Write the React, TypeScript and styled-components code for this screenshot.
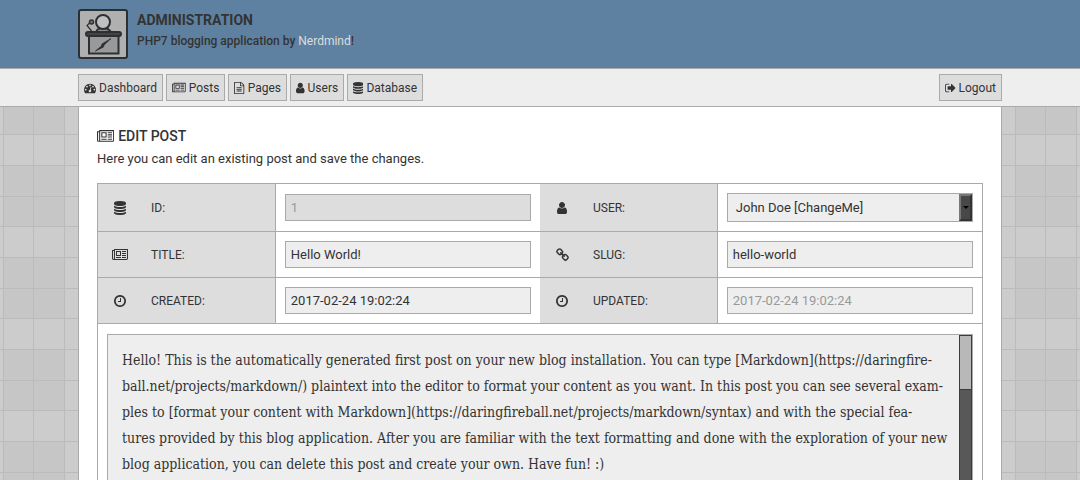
import React from "react";
import styled, { createGlobalStyle } from "styled-components";

const ui = `Roboto, "Noto Sans", "Liberation Sans", sans-serif`;
const slab = `"DejaVu Serif Condensed", "DejaVu Serif", "Noto Serif", serif`;
const ink = "#333333";
const line = "#aaaaaa";

const GlobalStyle = createGlobalStyle`
  *, *::before, *::after { box-sizing: border-box; }
  body {
    margin: 0;
    color: ${ink};
    font: 14px/24px ${ui};
    background-color: #c6c6c6;
    background-image:
      linear-gradient(90deg, #bbbbbb 0 1px, transparent 1px 30px, #bbbbbb 30px 31px, transparent 31px 61px, #bbbbbb 61px 62px, transparent 62px 92px),
      linear-gradient(180deg, #bbbbbb 0 1px, transparent 1px 31px, #bbbbbb 31px 32px, transparent 32px 61px, #bbbbbb 61px 62px, transparent 62px 92px),
      linear-gradient(90deg, transparent 62px, #cccccc 62px),
      linear-gradient(180deg, transparent 62px, #cccccc 62px);
    background-size: 92px 92px;
    background-position: calc(50% - 31px) 73px;
  }
`;

const Container = styled.div`
  width: 100%;
  max-width: 924px;
  margin: 0 auto;
`;

const Header = styled.header`
  background: #5e81a1;
  border-bottom: 1px solid ${line};
`;

const Brand = styled(Container)`
  display: flex;
  gap: 9px;
  padding: 9px 0;
`;

const Logo = styled.svg`
  width: 50px;
  height: 50px;
  flex: none;
`;

const BrandText = styled.div`
  padding-top: 1px;
`;

const BrandTitle = styled.h1`
  margin: 0;
  font-size: 14px;
  line-height: 20px;
  font-weight: 700;
  text-transform: uppercase;
`;

const Tagline = styled.p`
  margin: 0;
  font-size: 12px;
  line-height: 22px;
  font-weight: 500;
`;

const TaglineLink = styled.a`
  color: #dddddd;
  font-weight: 400;
  text-decoration: none;
`;

const Nav = styled.nav`
  background: #eeeeee;
  border-bottom: 1px solid ${line};
`;

const NavBar = styled(Container)`
  display: flex;
  justify-content: space-between;
  padding: 5px 0;
`;

const NavGroup = styled.div`
  display: flex;
  gap: 3px;
`;

const NavLink = styled.a`
  display: flex;
  align-items: center;
  gap: 3px;
  height: 27px;
  padding: 0 5px;
  border: 1px solid ${line};
  background: #dddddd;
  color: ${ink};
  font-size: 12px;
  text-decoration: none;
`;

const Icon = styled.svg<{ $size: number }>`
  height: ${(p) => p.$size}px;
  width: auto;
  flex: none;
  fill: currentColor;
`;

const Panel = styled(Container)`
  padding: 18px;
  background: #ffffff;
  border: solid ${line};
  border-width: 0 1px;
`;

const Heading = styled.h2`
  display: flex;
  align-items: center;
  gap: 4px;
  margin: 0;
  font-size: 14px;
  line-height: 22px;
  font-weight: 500;
  text-transform: uppercase;
`;

const Intro = styled.p`
  margin: 0 0 12px;
  font-size: 13px;
`;

const Form = styled.form`
  border: 1px solid ${line};
`;

const Row = styled.div`
  display: grid;
  grid-template-columns: 2fr 3fr 2fr 3fr;
  border-bottom: 1px solid ${line};
`;

const LabelCell = styled.label`
  display: flex;
  align-items: center;
  background: #dddddd;
  font-size: 12px;
  text-transform: uppercase;
`;

const IconSlot = styled.span`
  display: flex;
  justify-content: center;
  width: 44px;
  margin-right: 9px;
`;

const FieldCell = styled.div`
  display: flex;
  align-items: center;
  padding: 9px;
  border-left: 1px solid ${line};
`;

const TextInput = styled.input`
  width: 100%;
  height: 27px;
  padding: 0 5px;
  border: 1px solid ${line};
  border-radius: 0;
  background: #eeeeee;
  color: ${ink};
  font: 13px ${ui};
  &:disabled { background: #dddddd; color: #999999; }
  &:read-only:not(:disabled) { color: #999999; }
`;

const SelectFrame = styled.div`
  display: flex;
  width: 100%;
  height: 29px;
  border: 1px solid ${line};
  background: #eeeeee;
`;

const Select = styled.select`
  appearance: none;
  flex: 1;
  min-width: 0;
  padding: 0 8px;
  border: 0;
  background: transparent;
  color: ${ink};
  font: 13px ${ui};
`;

const Arrow = styled.span`
  display: flex;
  align-items: center;
  justify-content: center;
  width: 13px;
  border: 2px solid;
  border-color: #777777 #333333 #333333 #777777;
  background: #484848;
  &::after {
    content: "";
    border: 3px solid transparent;
    border-top-color: #000000;
    border-bottom: 0;
  }
`;

const EditorFrame = styled.div`
  display: flex;
  margin: 10px 9px 9px;
  border: 1px solid ${line};
  background: #eeeeee;
`;

const Editor = styled.textarea`
  flex: 1;
  min-width: 0;
  height: 400px;
  padding: 12px 14px;
  border: 0;
  resize: none;
  overflow: hidden;
  white-space: pre;
  background: transparent;
  color: ${ink};
  font: 14px/26px ${slab};
`;

const Track = styled.div`
  width: 13px;
  background: #585858;
  border: solid #3c3c3c;
  border-width: 0 1px;
`;

const Thumb = styled.div`
  height: 55px;
  background: #b8b8b8;
  border: solid #3c3c3c;
  border-width: 1px 0;
`;

type IconName = "gauge" | "news" | "page" | "user" | "database" | "logout" | "clock" | "link";

const icons: Record<IconName, { box: string; d: string }> = {
  gauge: {
    box: "0 0 1792 1792",
    d: "M384 1152q0-53-37.5-90.5t-90.5-37.5-90.5 37.5-37.5 90.5 37.5 90.5 90.5 37.5 90.5-37.5 37.5-90.5zm192-448q0-53-37.5-90.5t-90.5-37.5-90.5 37.5-37.5 90.5 37.5 90.5 90.5 37.5 90.5-37.5 37.5-90.5zm428 481l101-382q6-26-7.5-48.5t-38.5-29.5-48 6.5-30 39.5l-101 382q-60 5-107 43.5t-63 98.5q-20 77 20 146t117 89 146-20 89-117q16-60-6-117t-72-91zm660-33q0-53-37.5-90.5t-90.5-37.5-90.5 37.5-37.5 90.5 37.5 90.5 90.5 37.5 90.5-37.5 37.5-90.5zm-640-640q0-53-37.5-90.5t-90.5-37.5-90.5 37.5-37.5 90.5 37.5 90.5 90.5 37.5 90.5-37.5 37.5-90.5zm448 192q0-53-37.5-90.5t-90.5-37.5-90.5 37.5-37.5 90.5 37.5 90.5 90.5 37.5 90.5-37.5 37.5-90.5zm320 448q0 261-141 483-19 29-54 29h-1402q-35 0-54-29-141-221-141-483 0-182 71-348t191-286 286-191 348-71 348 71 286 191 191 286 71 348z",
  },
  news: {
    box: "0 0 2048 1792",
    d: "M1024 512h-384v384h384v-384zm128 640v128h-640v-128h640zm0-768v640h-640v-640h640zm640 768v128h-512v-128h512zm0-256v128h-512v-128h512zm0-256v128h-512v-128h512zm0-256v128h-512v-128h512zm-1536 960v-960h-128v960q0 26 19 45t45 19 45-19 19-45zm1664 0v-1088h-1536v1088q0 33-11 64h1483q26 0 45-19t19-45zm128-1216v1216q0 80-56 136t-136 56h-1664q-80 0-136-56t-56-136v-1088h256v-128h1792z",
  },
  page: {
    box: "128 0 1536 1792",
    d: "M1596 380q28 28 48 76t20 88v1152q0 40-28 68t-68 28h-1344q-40 0-68-28t-28-68v-1600q0-40 28-68t68-28h896q40 0 88 20t76 48zm-444-244v376h376q-10-29-22-41l-313-313q-12-12-41-22zm384 1528v-1024h-416q-40 0-68-28t-28-68v-416h-768v1536h1280zm-1024-864q0-14 9-23t23-9h704q14 0 23 9t9 23v64q0 14-9 23t-23 9h-704q-14 0-23-9t-9-23v-64zm736 224q14 0 23 9t9 23v64q0 14-9 23t-23 9h-704q-14 0-23-9t-9-23v-64q0-14 9-23t23-9h704zm0 256q14 0 23 9t9 23v64q0 14-9 23t-23 9h-704q-14 0-23-9t-9-23v-64q0-14 9-23t23-9h704z",
  },
  user: {
    box: "256 0 1280 1792",
    d: "M1536 1399q0 109-62.5 187t-150.5 78h-854q-88 0-150.5-78t-62.5-187q0-85 8.5-160.5t31.5-152 58.5-131 94-89 134.5-34.5q131 128 313 128t313-128q76 0 134.5 34.5t94 89 58.5 131 31.5 152 8.5 160.5zm-256-887q0 159-112.5 271.5t-271.5 112.5-271.5-112.5-112.5-271.5 112.5-271.5 271.5-112.5 271.5 112.5 112.5 271.5z",
  },
  database: {
    box: "128 0 1536 1792",
    d: "M896 768q237 0 443-43t325-127v170q0 69-103 128t-280 93.5-385 34.5-385-34.5-280-93.5-103-128v-170q119 84 325 127t443 43zm0 768q237 0 443-43t325-127v170q0 69-103 128t-280 93.5-385 34.5-385-34.5-280-93.5-103-128v-170q119 84 325 127t443 43zm0-384q237 0 443-43t325-127v170q0 69-103 128t-280 93.5-385 34.5-385-34.5-280-93.5-103-128v-170q119 84 325 127t443 43zm0-1152q208 0 385 34.5t280 93.5 103 128v128q0 69-103 128t-280 93.5-385 34.5-385-34.5-280-93.5-103-128v-128q0-69 103-128t280-93.5 385-34.5z",
  },
  logout: {
    box: "64 0 1600 1792",
    d: "M704 1440q0 4 1 20t.5 26.5-3 23.5-10 19.5-20.5 6.5h-320q-119 0-203.5-84.5t-84.5-203.5v-704q0-119 84.5-203.5t203.5-84.5h320q13 0 22.5 9.5t9.5 22.5q0 4 1 20t.5 26.5-3 23.5-10 19.5-20.5 6.5h-320q-66 0-113 47t-47 113v704q0 66 47 113t113 47h312l11.5 1 11.5 3 8 5.5 7 9 2 13.5zm928-544q0 26-19 45l-544 544q-19 19-45 19t-45-19-19-45v-288h-448q-26 0-45-19t-19-45v-384q0-26 19-45t45-19h448v-288q0-26 19-45t45-19 45 19l544 544q19 19 19 45z",
  },
  clock: {
    box: "128 0 1536 1792",
    d: "M1024 544v448q0 14-9 23t-23 9h-320q-14 0-23-9t-9-23v-64q0-14 9-23t23-9h224v-352q0-14 9-23t23-9h64q14 0 23 9t9 23zm416 352q0-148-73-273t-198-198-273-73-273 73-198 198-73 273 73 273 198 198 273 73 273-73 198-198 73-273zm224 0q0 209-103 385.5t-279.5 279.5-385.5 103-385.5-103-279.5-279.5-103-385.5 103-385.5 279.5-279.5 385.5-103 385.5 103 279.5 279.5 103 385.5z",
  },
  link: {
    box: "64 0 1664 1792",
    d: "M1520 1216q0-40-28-68l-208-208q-28-28-68-28-42 0-72 32 3 3 19 18.5t21.5 21.5 15 19 13 25.5 3.5 27.5q0 40-28 68t-68 28q-15 0-27.5-3.5t-25.5-13-19-15-21.5-21.5-18.5-19q-33 31-33 73 0 40 28 68l206 207q27 27 68 27 40 0 68-26l147-146q28-28 28-67zm-703-705q0-40-28-68l-206-207q-28-28-68-28-39 0-68 27l-147 146q-28 28-28 67 0 40 28 68l208 208q27 27 68 27 42 0 72-31-3-3-19-18.5t-21.5-21.5-15-19-13-25.5-3.5-27.5q0-40 28-68t68-28q15 0 27.5 3.5t25.5 13 19 15 21.5 21.5 18.5 19q33-31 33-73zm895 705q0 120-85 203l-147 146q-83 83-203 83-121 0-204-85l-206-207q-83-83-83-203 0-123 88-209l-88-88q-86 88-208 88-120 0-204-84l-208-208q-84-84-84-204t85-203l147-146q83-83 203-83 121 0 204 85l206 207q83 83 83 203 0 123-88 209l88 88q86-88 208-88 120 0 204 84l208 208q84 84 84 204z",
  },
};

function Glyph({ name, size = 14 }: { name: IconName; size?: number }) {
  return (
    <Icon viewBox={icons[name].box} $size={size} aria-hidden="true">
      <path d={icons[name].d} />
    </Icon>
  );
}

function FieldLabel({ icon, id, children }: { icon: IconName; id: string; children: React.ReactNode }) {
  return (
    <LabelCell htmlFor={id}>
      <IconSlot>
        <Glyph name={icon} />
      </IconSlot>
      {children}
    </LabelCell>
  );
}

const links: { icon: IconName; text: string }[] = [
  { icon: "gauge", text: "Dashboard" },
  { icon: "news", text: "Posts" },
  { icon: "page", text: "Pages" },
  { icon: "user", text: "Users" },
  { icon: "database", text: "Database" },
];

const body = `Hello! This is the automatically generated first post on your new blog installation. You can type [Markdown](https://daringfire-
ball.net/projects/markdown/) plaintext into the editor to format your content as you want. In this post you can see several exam-
ples to [format your content with Markdown](https://daringfireball.net/projects/markdown/syntax) and with the special fea-
tures provided by this blog application. After you are familiar with the text formatting and done with the exploration of your new
blog application, you can delete this post and create your own. Have fun! :)`;

export default function App() {
  return (
    <>
      <GlobalStyle />
      <Header>
        <Brand>
          <Logo viewBox="0 0 50 50" fill="none" stroke="#2d3033" strokeWidth="2" aria-hidden="true">
            <rect x="1" y="1" width="48" height="48" rx="2" fill="#b0b0b0" />
            <path d="M18 23c1-3 3-4 7-4s6 1 8 4z" fill="#8f8f8f" />
            <circle cx="25" cy="13" r="7" fill="#c0c0c0" />
            <circle cx="13.5" cy="13" r="2" fill="#777777" strokeWidth="1.5" />
            <path d="M11.5 14l-2.5 2.5 5 6" strokeWidth="1.2" />
            <rect x="11" y="26" width="29.5" height="18.5" fill="#999999" />
            <rect x="8" y="23" width="35" height="4" rx="2" fill="#444444" />
            <path d="M33 29.500l-9 5.500-.5 2-6 5 8-4 .5-2z" fill="#2d3033" strokeWidth="0.8" />
          </Logo>
          <BrandText>
            <BrandTitle>Administration</BrandTitle>
            <Tagline>
              PHP7 blogging application by <TaglineLink href="#">Nerdmind</TaglineLink>!
            </Tagline>
          </BrandText>
        </Brand>
      </Header>
      <Nav>
        <NavBar>
          <NavGroup>
            {links.map((l) => (
              <NavLink href="#" key={l.text}>
                <Glyph name={l.icon} size={12} />
                {l.text}
              </NavLink>
            ))}
          </NavGroup>
          <NavLink href="#">
            <Glyph name="logout" size={12} />
            Logout
          </NavLink>
        </NavBar>
      </Nav>
      <Panel as="main">
        <Heading>
          <Glyph name="news" size={15} />
          Edit Post
        </Heading>
        <Intro>Here you can edit an existing post and save the changes.</Intro>
        <Form>
          <Row>
            <FieldLabel icon="database" id="post-id">ID:</FieldLabel>
            <FieldCell><TextInput id="post-id" defaultValue="1" disabled /></FieldCell>
            <FieldLabel icon="user" id="post-user">User:</FieldLabel>
            <FieldCell>
              <SelectFrame>
                <Select id="post-user"><option>John Doe [ChangeMe]</option></Select>
                <Arrow />
              </SelectFrame>
            </FieldCell>
          </Row>
          <Row>
            <FieldLabel icon="news" id="post-title">Title:</FieldLabel>
            <FieldCell><TextInput id="post-title" defaultValue="Hello World!" /></FieldCell>
            <FieldLabel icon="link" id="post-slug">Slug:</FieldLabel>
            <FieldCell><TextInput id="post-slug" defaultValue="hello-world" /></FieldCell>
          </Row>
          <Row>
            <FieldLabel icon="clock" id="post-created">Created:</FieldLabel>
            <FieldCell><TextInput id="post-created" defaultValue="2017-02-24 19:02:24" /></FieldCell>
            <FieldLabel icon="clock" id="post-updated">Updated:</FieldLabel>
            <FieldCell><TextInput id="post-updated" defaultValue="2017-02-24 19:02:24" readOnly /></FieldCell>
          </Row>
          <EditorFrame>
            <Editor aria-label="Content" defaultValue={body} spellCheck={false} />
            <Track><Thumb /></Track>
          </EditorFrame>
        </Form>
      </Panel>
    </>
  );
}
